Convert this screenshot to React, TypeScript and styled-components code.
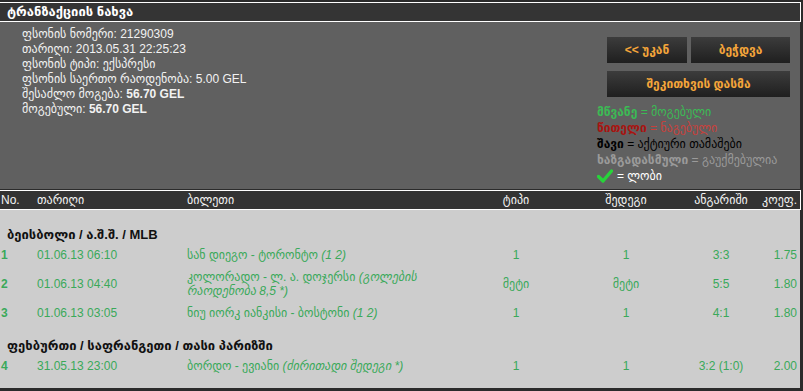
import React from 'react';
import styled, { createGlobalStyle } from 'styled-components';

const GlobalStyle = createGlobalStyle`
  *, *::before, *::after { box-sizing: border-box; }
  html, body { margin: 0; padding: 0; background: #2b2b2b; }
  body {
    font-family: "Liberation Sans", Arial, "DejaVu Sans", sans-serif;
    font-size: 12px;
  }
`;

const COLUMNS = '36px 150px 260px 140px 80px 110px minmax(0, 1fr)';

const Page = styled.div`
  width: 801px;
  padding-top: 2px;
`;

const TitleBar = styled.div`
  height: 20px;
  background: #343434;
  border: 1px solid #ffffff;
  border-left: none;
  color: #ffffff;
  font-weight: bold;
  font-size: 13px;
  line-height: 18px;
  padding-left: 7px;
`;

const InfoPanel = styled.div`
  width: 800px;
  display: flex;
  justify-content: space-between;
  background: #606060;
  padding: 5px 9px 5px 22px;
`;

const InfoList = styled.div`
  color: #f2f2f2;
  line-height: 15px;
  font-size: 12px;
`;

const InfoLine = styled.div``;

const Strong = styled.b`
  font-weight: bold;
`;

const SideColumn = styled.div`
  width: 194px;
  display: flex;
  flex-direction: column;
  padding-top: 10px;
`;

const ButtonGrid = styled.div`
  margin-left: 10px;
  display: grid;
  grid-template-columns: 80px 99px;
  column-gap: 4px;
  row-gap: 8px;
`;

const Button = styled.button<{ $wide?: boolean }>`
  grid-column: ${(p) => (p.$wide ? '1 / span 2' : 'auto')};
  height: 26px;
  border: none;
  padding: 0;
  background: linear-gradient(#3c3c3c, #1f1f1f);
  color: #f4a53a;
  font-family: "Liberation Sans", Arial, "DejaVu Sans", sans-serif;
  font-weight: bold;
  font-size: 12px;
  cursor: pointer;
`;

const Legend = styled.div`
  margin-top: 7px;
  font-size: 12px;
`;

const LegendLine = styled.div<{ $color: string; $keyColor?: string }>`
  height: 16px;
  line-height: 16px;
  color: ${(p) => p.$color};
  white-space: nowrap;
  display: flex;
  align-items: center;
  gap: 4px;
  & b {
    color: ${(p) => p.$keyColor || p.$color};
  }
`;

const LegendText = styled.span``;

const TableHead = styled.div`
  margin-top: 1px;
  width: 801px;
  height: 20px;
  display: grid;
  grid-template-columns: ${COLUMNS};
  background: #333333;
  border: 1px solid #ffffff;
  border-left: none;
  color: #f4f4f4;
  line-height: 18px;
  font-size: 12px;
`;

const HeadCell = styled.div<{ $align?: 'left' | 'center' | 'right' }>`
  display: flex;
  min-width: 0;
  white-space: nowrap;
  padding-left: ${(p) => (p.$align && p.$align !== 'left' ? '0' : '1px')};
  padding-right: ${(p) => (p.$align === 'right' ? '3px' : '0')};
  justify-content: ${(p) =>
    p.$align === 'center' ? 'center' : p.$align === 'right' ? 'flex-end' : 'flex-start'};
`;

const TableBody = styled.div`
  width: 800px;
  background: #cdcdcd;
  padding: 3px 0 11px;
`;

const GroupTitle = styled.div`
  padding: 15px 7px 2px;
  height: 31px;
  line-height: 14px;
  font-weight: bold;
  font-size: 13px;
  color: #111111;
`;

const Row = styled.div`
  display: grid;
  grid-template-columns: ${COLUMNS};
  padding: 4px 0;
  line-height: 14px;
  color: #3aa95a;
  font-size: 12px;
  align-items: center;
`;

const Cell = styled.div<{ $align?: 'left' | 'center' | 'right'; $bold?: boolean }>`
  display: flex;
  min-width: 0;
  padding-left: ${(p) => (p.$align && p.$align !== 'left' ? '0' : '1px')};
  padding-right: ${(p) => (p.$align === 'right' ? '3px' : '0')};
  justify-content: ${(p) =>
    p.$align === 'center' ? 'center' : p.$align === 'right' ? 'flex-end' : 'flex-start'};
  font-weight: ${(p) => (p.$bold ? 'bold' : 'normal')};
  white-space: nowrap;
`;

const TicketCell = styled.div`
  padding-left: 1px;
  padding-right: 6px;
`;

const Note = styled.i`
  font-style: italic;
`;

const Check = () => (
  <svg width="16" height="14" viewBox="0 0 16 14" aria-hidden="true">
    <path d="M1.5 7.5 L6 12 L14.5 2" fill="none" stroke="#27d33a" strokeWidth="3.4" strokeLinecap="round" strokeLinejoin="round" />
  </svg>
);

type Bet = {
  no: number;
  date: string;
  ticket: string;
  note: string;
  type: string;
  result: string;
  score: string;
  coef: string;
};

const groups: { title: string; bets: Bet[] }[] = [
  {
    title: 'ბეისბოლი / ა.შ.შ. / MLB',
    bets: [
      { no: 1, date: '01.06.13 06:10', ticket: 'სან დიეგო - ტორონტო', note: '(1 2)', type: '1', result: '1', score: '3:3', coef: '1.75' },
      { no: 2, date: '01.06.13 04:40', ticket: 'კოლორადო - ლ. ა. დოჯერსი', note: '(გოლების რაოდენობა 8,5 *)', type: 'მეტი', result: 'მეტი', score: '5:5', coef: '1.80' },
      { no: 3, date: '01.06.13 03:05', ticket: 'ნიუ იორკ იანკისი - ბოსტონი', note: '(1 2)', type: '1', result: '1', score: '4:1', coef: '1.80' },
    ],
  },
  {
    title: 'ფეხბურთი / საფრანგეთი / თასი პარიზში',
    bets: [
      { no: 4, date: '31.05.13 23:00', ticket: 'ბორდო - ევიანი', note: '(ძირითადი შედეგი *)', type: '1', result: '1', score: '3:2 (1:0)', coef: '2.00' },
    ],
  },
];

export default function App() {
  return (
    <Page>
      <GlobalStyle />
      <TitleBar>ტრანზაქციის ნახვა</TitleBar>
      <InfoPanel>
        <InfoList>
          <InfoLine>ფსონის ნომერი: 21290309</InfoLine>
          <InfoLine>თარიღი: 2013.05.31 22:25:23</InfoLine>
          <InfoLine>ფსონის ტიპი: ექსპრესი</InfoLine>
          <InfoLine>ფსონის საერთო რაოდენობა: 5.00 GEL</InfoLine>
          <InfoLine>
            შესაძლო მოგება: <Strong>56.70 GEL</Strong>
          </InfoLine>
          <InfoLine>
            მოგებული: <Strong>56.70 GEL</Strong>
          </InfoLine>
        </InfoList>
        <SideColumn>
          <ButtonGrid>
            <Button>&lt;&lt; უკან</Button>
            <Button>ბეჭდვა</Button>
            <Button $wide>შეკითხვის დასმა</Button>
          </ButtonGrid>
          <Legend>
            <LegendLine $color="#3cba55">
              <LegendText>
                <b>მწვანე</b> = მოგებული
              </LegendText>
            </LegendLine>
            <LegendLine $color="#c8403c" $keyColor="#a81410">
              <LegendText>
                <b>წითელი</b> = ნაგებული
              </LegendText>
            </LegendLine>
            <LegendLine $color="#000000">
              <LegendText>
                <b>შავი</b> = აქტიური თამაშები
              </LegendText>
            </LegendLine>
            <LegendLine $color="#9a9a9a">
              <LegendText>
                <b>ხაზგადასმული</b> = გაუქმებულია
              </LegendText>
            </LegendLine>
            <LegendLine $color="#ffffff">
              <Check />
              <LegendText>= ლობი</LegendText>
            </LegendLine>
          </Legend>
        </SideColumn>
      </InfoPanel>
      <TableHead>
        <HeadCell>No.</HeadCell>
        <HeadCell>თარიღი</HeadCell>
        <HeadCell>ბილეთი</HeadCell>
        <HeadCell $align="center">ტიპი</HeadCell>
        <HeadCell $align="center">შედეგი</HeadCell>
        <HeadCell $align="center">ანგარიში</HeadCell>
        <HeadCell $align="right">კოეფ.</HeadCell>
      </TableHead>
      <TableBody>
        {groups.map((g) => (
          <React.Fragment key={g.title}>
            <GroupTitle>{g.title}</GroupTitle>
            {g.bets.map((b) => (
              <Row key={b.no}>
                <Cell $bold>{b.no}</Cell>
                <Cell>{b.date}</Cell>
                <TicketCell>
                  {b.ticket} <Note>{b.note}</Note>
                </TicketCell>
                <Cell $align="center">{b.type}</Cell>
                <Cell $align="center">{b.result}</Cell>
                <Cell $align="center">{b.score}</Cell>
                <Cell $align="right">{b.coef}</Cell>
              </Row>
            ))}
          </React.Fragment>
        ))}
      </TableBody>
    </Page>
  );
}
